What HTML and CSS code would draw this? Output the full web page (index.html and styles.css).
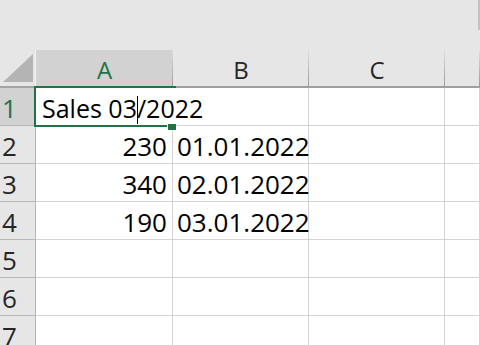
FILE: index.html
```html
<!DOCTYPE html>
<html lang="en">
<head>
    <meta charset="UTF-8">
    <title>Sheet</title>
    <link rel="stylesheet" href="styles.css">
</head>
<body>
    <div class="topbar"><div class="scroll"></div></div>
    <div class="sheet">
        <div class="corner"><div class="tri"></div></div>
        <div class="colhead active">A</div>
        <div class="colhead">B</div>
        <div class="colhead">C</div>
        <div class="colhead"></div>

        <div class="rowhead active">1</div>
        <div class="cell a1">
            <span class="text">Sales 03<span class="caret"></span>/2022</span>
            <div class="selection"></div>
            <div class="handle"></div>
        </div>
        <div class="cell"></div>
        <div class="cell"></div>
        <div class="cell"></div>

        <div class="rowhead">2</div>
        <div class="cell num">230</div>
        <div class="cell">01.01.2022</div>
        <div class="cell"></div>
        <div class="cell"></div>

        <div class="rowhead">3</div>
        <div class="cell num">340</div>
        <div class="cell">02.01.2022</div>
        <div class="cell"></div>
        <div class="cell"></div>

        <div class="rowhead">4</div>
        <div class="cell num">190</div>
        <div class="cell">03.01.2022</div>
        <div class="cell"></div>
        <div class="cell"></div>

        <div class="rowhead">5</div>
        <div class="cell"></div>
        <div class="cell"></div>
        <div class="cell"></div>
        <div class="cell"></div>

        <div class="rowhead">6</div>
        <div class="cell"></div>
        <div class="cell"></div>
        <div class="cell"></div>
        <div class="cell"></div>

        <div class="rowhead">7</div>
        <div class="cell"></div>
        <div class="cell"></div>
        <div class="cell"></div>
        <div class="cell"></div>
    </div>
</body>
</html>
```

FILE: styles.css
```css
body {
    margin: 0;
    background: #fff;
    font-family: 'Open Sans', sans-serif;
    color: #000;
    overflow: hidden;
    height: 345px;
}
.topbar {
    height: 50px;
    background: #e6e6e6;
    display: flex;
    justify-content: flex-end;
}
.scroll {
    width: 2px;
    height: 30px;
    background: #c4c4c4;
}
.sheet {
    display: grid;
    grid-template-columns: 36px 137px 136px 136px 1fr;
    grid-template-rows: 38px;
    grid-auto-rows: 38px;
}
.corner {
    background: #e6e6e6;
    border-bottom: 2px solid #a4a4a4;
    border-right: 1px solid #f2f2f2;
    box-sizing: border-box;
    padding: 4px 2px 3px 3px;
}
.tri {
    width: 30px;
    height: 28px;
    background: #b4b4b4;
    clip-path: polygon(100% 0, 100% 100%, 0 100%);
}
.colhead {
    background: linear-gradient(to bottom, #dedede, #9c9c9c) right / 1px 100% no-repeat, #e6e6e6;
    border-bottom: 2px solid #a0a0a0;
    box-sizing: border-box;
    display: flex;
    align-items: center;
    justify-content: center;
    padding-top: 3px;
    font-size: 24px;
    color: #262626;
}
.colhead.active {
    background-color: #d2d2d2;
    border-bottom-color: #217346;
    color: #217346;
}
.rowhead {
    background: #e6e6e6;
    border-right: 1px solid #b4b4b4;
    border-bottom: 1px solid #b8b8b8;
    box-sizing: border-box;
    display: flex;
    align-items: center;
    padding: 3px 0 0 2px;
    font-size: 26px;
    color: #262626;
}
.rowhead.active {
    background: #d2d2d2;
    color: #217346;
}
.cell {
    border-right: 1px solid #d4d4d4;
    border-bottom: 1px solid #d4d4d4;
    box-sizing: border-box;
    display: flex;
    align-items: center;
    padding: 2px 0 0 4px;
    font-size: 26px;
    white-space: nowrap;
    background: #fff;
}
.cell.num {
    justify-content: flex-end;
    padding-right: 5px;
}
.a1 {
    position: relative;
    z-index: 1;
    border-right-color: #fff;
    padding-left: 6px;
    font-size: 25px;
}
.caret {
    display: inline-block;
    width: 0;
    height: 28px;
    border-left: 1px solid #000;
    margin-right: -1px;
    vertical-align: -6px;
}
.selection {
    position: absolute;
    left: -2px;
    top: -2px;
    width: 142px;
    height: 41px;
    box-sizing: border-box;
    border: 2px solid #217346;
    border-right: none;
}
.handle {
    position: absolute;
    left: 131px;
    top: 35px;
    width: 8px;
    height: 6px;
    background: #217346;
    border-left: 1px solid #fff;
    border-top: 1px solid #fff;
}
```
